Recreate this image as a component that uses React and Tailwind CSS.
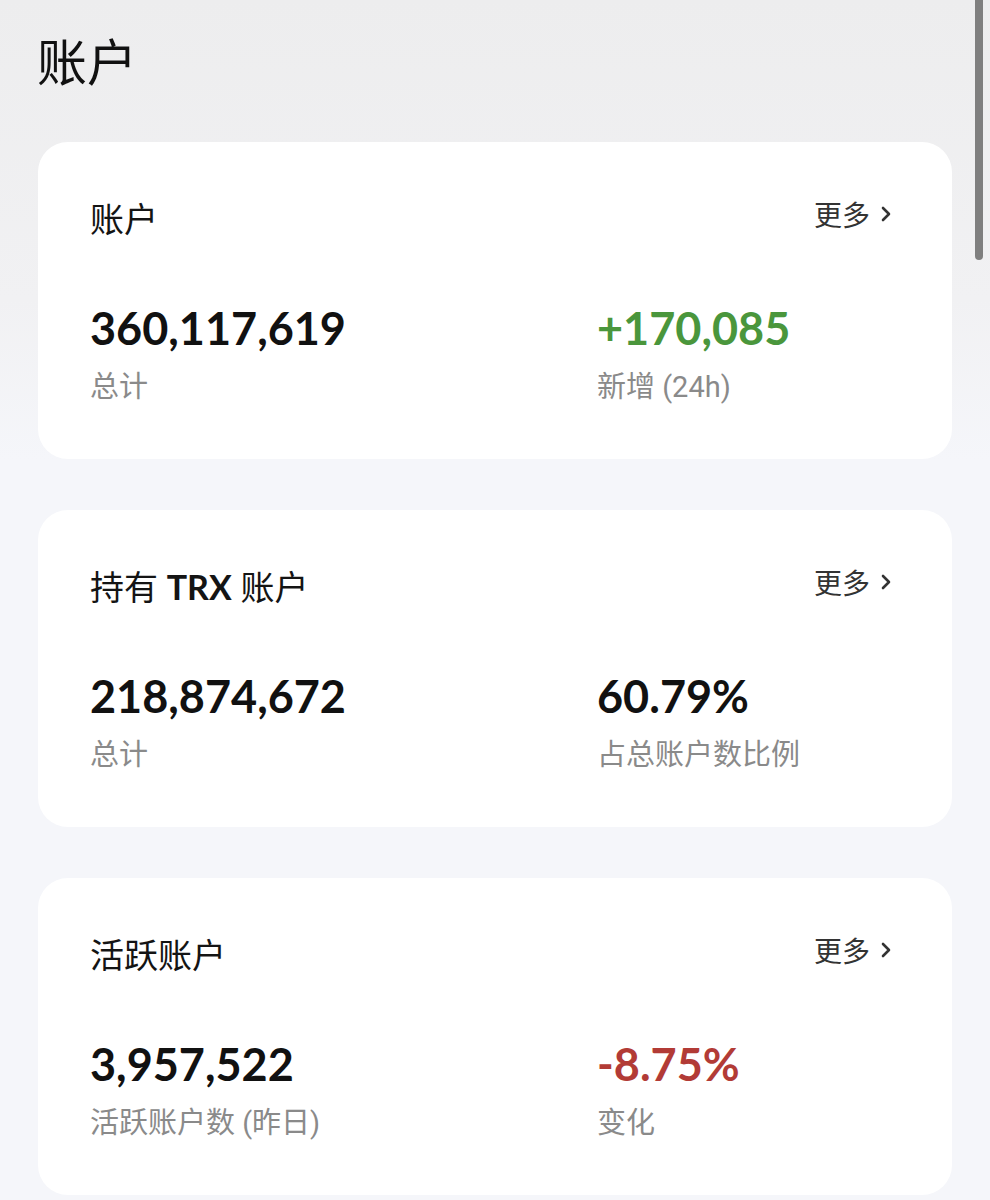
import React from 'react'

const cards = [
  {
    title: <>持有 <b className="font-bold">TRX</b> 账户</>,
    key: 'trx',
  },
]

const data = [
  {
    key: 'all',
    title: '账户',
    left: { value: '360,117,619', label: '总计' },
    right: { value: '+170,085', label: '新增 (24h)', tone: 'up' },
  },
  {
    key: 'trx',
    title: cards[0].title,
    left: { value: '218,874,672', label: '总计' },
    right: { value: '60.79%', label: '占总账户数比例' },
  },
  {
    key: 'active',
    title: '活跃账户',
    left: { value: '3,957,522', label: '活跃账户数 (昨日)' },
    right: { value: '-8.75%', label: '变化', tone: 'down' },
  },
]

const numFont = 'font-["Lato","Noto_Sans_CJK_SC",sans-serif]'

function Stat({ value, label, tone }) {
  const color = tone === 'up' ? 'text-[#4a963c]' : tone === 'down' ? 'text-[#b23b36]' : 'text-[#111111]'
  return (
    <div>
      <div className={`${numFont} text-[45px] leading-[45px] font-bold ${color}`}>{value}</div>
      <div className='mt-[22px] font-["Roboto","Noto_Sans_CJK_SC",sans-serif] text-[29px] leading-[29px] text-[#8a8a8a]'>
        {label}
      </div>
    </div>
  )
}

function Card({ title, left, right }) {
  return (
    <section className="h-[317px] rounded-[30px] bg-white pl-[52px] pr-[60px] pt-[57px]">
      <div className="flex items-start justify-between">
        <h2 className={`${numFont} text-[34px] leading-[40px] font-normal text-[#141414]`}>{title}</h2>
        <a className='flex items-center gap-[10px] font-["Noto_Sans_CJK_SC",sans-serif] text-[28px] leading-[30px] text-[#333333]'>
          更多
          <svg width="12" height="16" viewBox="0 0 12 16" fill="none" stroke="#333333" strokeWidth="2.6" strokeLinecap="round" strokeLinejoin="round">
            <path d="M3 2l6 6-6 6" />
          </svg>
        </a>
      </div>
      <div className="mt-[67px] grid grid-cols-[507px_1fr]">
        <Stat {...left} />
        <Stat {...right} />
      </div>
    </section>
  )
}

export default function App() {
  return (
    <div className="relative min-h-[1200px] bg-[linear-gradient(to_bottom,#ededee_0px,#f1f1f3_300px,#f5f6fa_460px)]">
      <div className="pl-[37px] pt-[34px]">
        <h1 className='font-["Noto_Sans_CJK_SC",sans-serif] text-[50px] leading-[50px] font-normal text-[#111111]'>账户</h1>
      </div>
      <main className="mt-[58px] ml-[38px] w-[914px] flex flex-col gap-[51px]">
        {data.map(({ key, ...c }) => (
          <Card key={key} {...c} />
        ))}
      </main>
      {/* overlay scrollbar */}
      <div className="absolute left-[975px] top-0 h-[260px] w-[8px] rounded-b-full bg-[#7f7f7f]" />
    </div>
  )
}
